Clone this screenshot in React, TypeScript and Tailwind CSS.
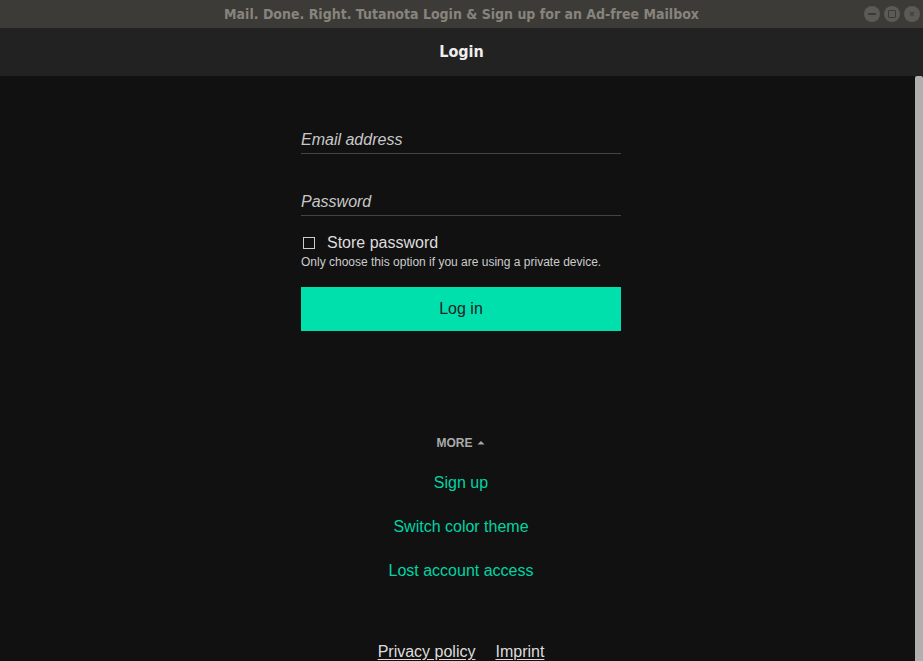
const MORE_LINKS = ["Sign up", "Switch color theme", "Lost account access"];

function WindowButtons() {
  return (
    <div className="absolute right-[3px] top-[6px] flex gap-[4px]">
      <span className="w-[16px] h-[16px] rounded-full bg-[#5c5a55] flex items-center justify-center">
        <span className="w-[8px] h-[1.5px] bg-[#3c3b37]" />
      </span>
      <span className="w-[16px] h-[16px] rounded-full bg-[#5c5a55] flex items-center justify-center">
        <span className="w-[8px] h-[8px] border border-[#3c3b37] rounded-[1px]" />
      </span>
      <span className="w-[16px] h-[16px] rounded-full bg-[#5c5a55] flex items-center justify-center text-[9px] leading-none text-[#3c3b37] font-bold">
        ×
      </span>
    </div>
  );
}

export default function App() {
  return (
    <div className="w-[923px] h-[661px] overflow-hidden flex flex-col bg-[#111111] font-['Liberation_Sans',Arial,sans-serif]">
      <div className="relative h-[28px] shrink-0 bg-[#3c3b37] flex items-center justify-center">
        <span className="font-['DejaVu_Sans_Condensed','DejaVu_Sans',sans-serif] font-bold text-[14px] text-[#87847d]">
          Mail. Done. Right. Tutanota Login &amp; Sign up for an Ad-free Mailbox
        </span>
        <WindowButtons />
      </div>

      <header className="h-[48px] shrink-0 bg-[#222222] flex items-center justify-center">
        <h1 className="font-['DejaVu_Sans_Condensed','DejaVu_Sans',sans-serif] font-bold text-[16px] text-[#eeeeee]">
          Login
        </h1>
      </header>

      <main className="relative flex-1 flex flex-col items-center pr-px">
        <div className="w-[320px] flex flex-col pt-[54px]">
          <div className="flex flex-col">
            <span className="italic text-[16px] leading-[20px] text-[#c8c8c8]">Email address</span>
            <div className="mt-[3px] h-px bg-[#444444]" />
          </div>
          <div className="flex flex-col mt-[38px]">
            <span className="italic text-[16px] leading-[20px] text-[#c8c8c8]">Password</span>
            <div className="mt-[3px] h-px bg-[#444444]" />
          </div>

          <label className="mt-[17px] flex items-center h-[20px]">
            <span className="ml-[2px] w-[12px] h-[12px] border border-[#cccccc]" />
            <span className="ml-[12px] text-[16px] text-[#dddddd]">Store password</span>
          </label>
          <p className="mt-[2px] text-[12px] leading-[14px] text-[#cccccc]">
            Only choose this option if you are using a private device.
          </p>

          <button className="mt-[18px] h-[44px] bg-[#00e0ad] text-[#222222] text-[16px]">Log in</button>
        </div>

        <div className="mt-[104px] flex flex-col items-center">
          <button className="flex items-center gap-[2px] text-[12px] font-bold text-[#aaaaaa] h-[16px]">
            MORE
            <svg width="10" height="10" viewBox="0 0 10 10" className="ml-[1px]">
              <path d="M1.5 6.5 L5 3 L8.5 6.5 Z" fill="#aaaaaa" />
            </svg>
          </button>
          <div className="mt-[10px] flex flex-col items-center">
            {MORE_LINKS.map((label) => (
              <a key={label} className="h-[44px] flex items-center text-[16px] text-[#00d4a3]">
                {label}
              </a>
            ))}
          </div>
        </div>

        <div className="mt-[49px] flex gap-[20px] text-[16px] leading-[20px] text-[#dddddd]">
          <a className="underline underline-offset-2">Privacy policy</a>
          <a className="underline underline-offset-2">Imprint</a>
        </div>

        <div className="absolute right-0 top-0 bottom-0 w-[8px] bg-[#b0b0b0] rounded-t-[2px]" />
      </main>
    </div>
  );
}
